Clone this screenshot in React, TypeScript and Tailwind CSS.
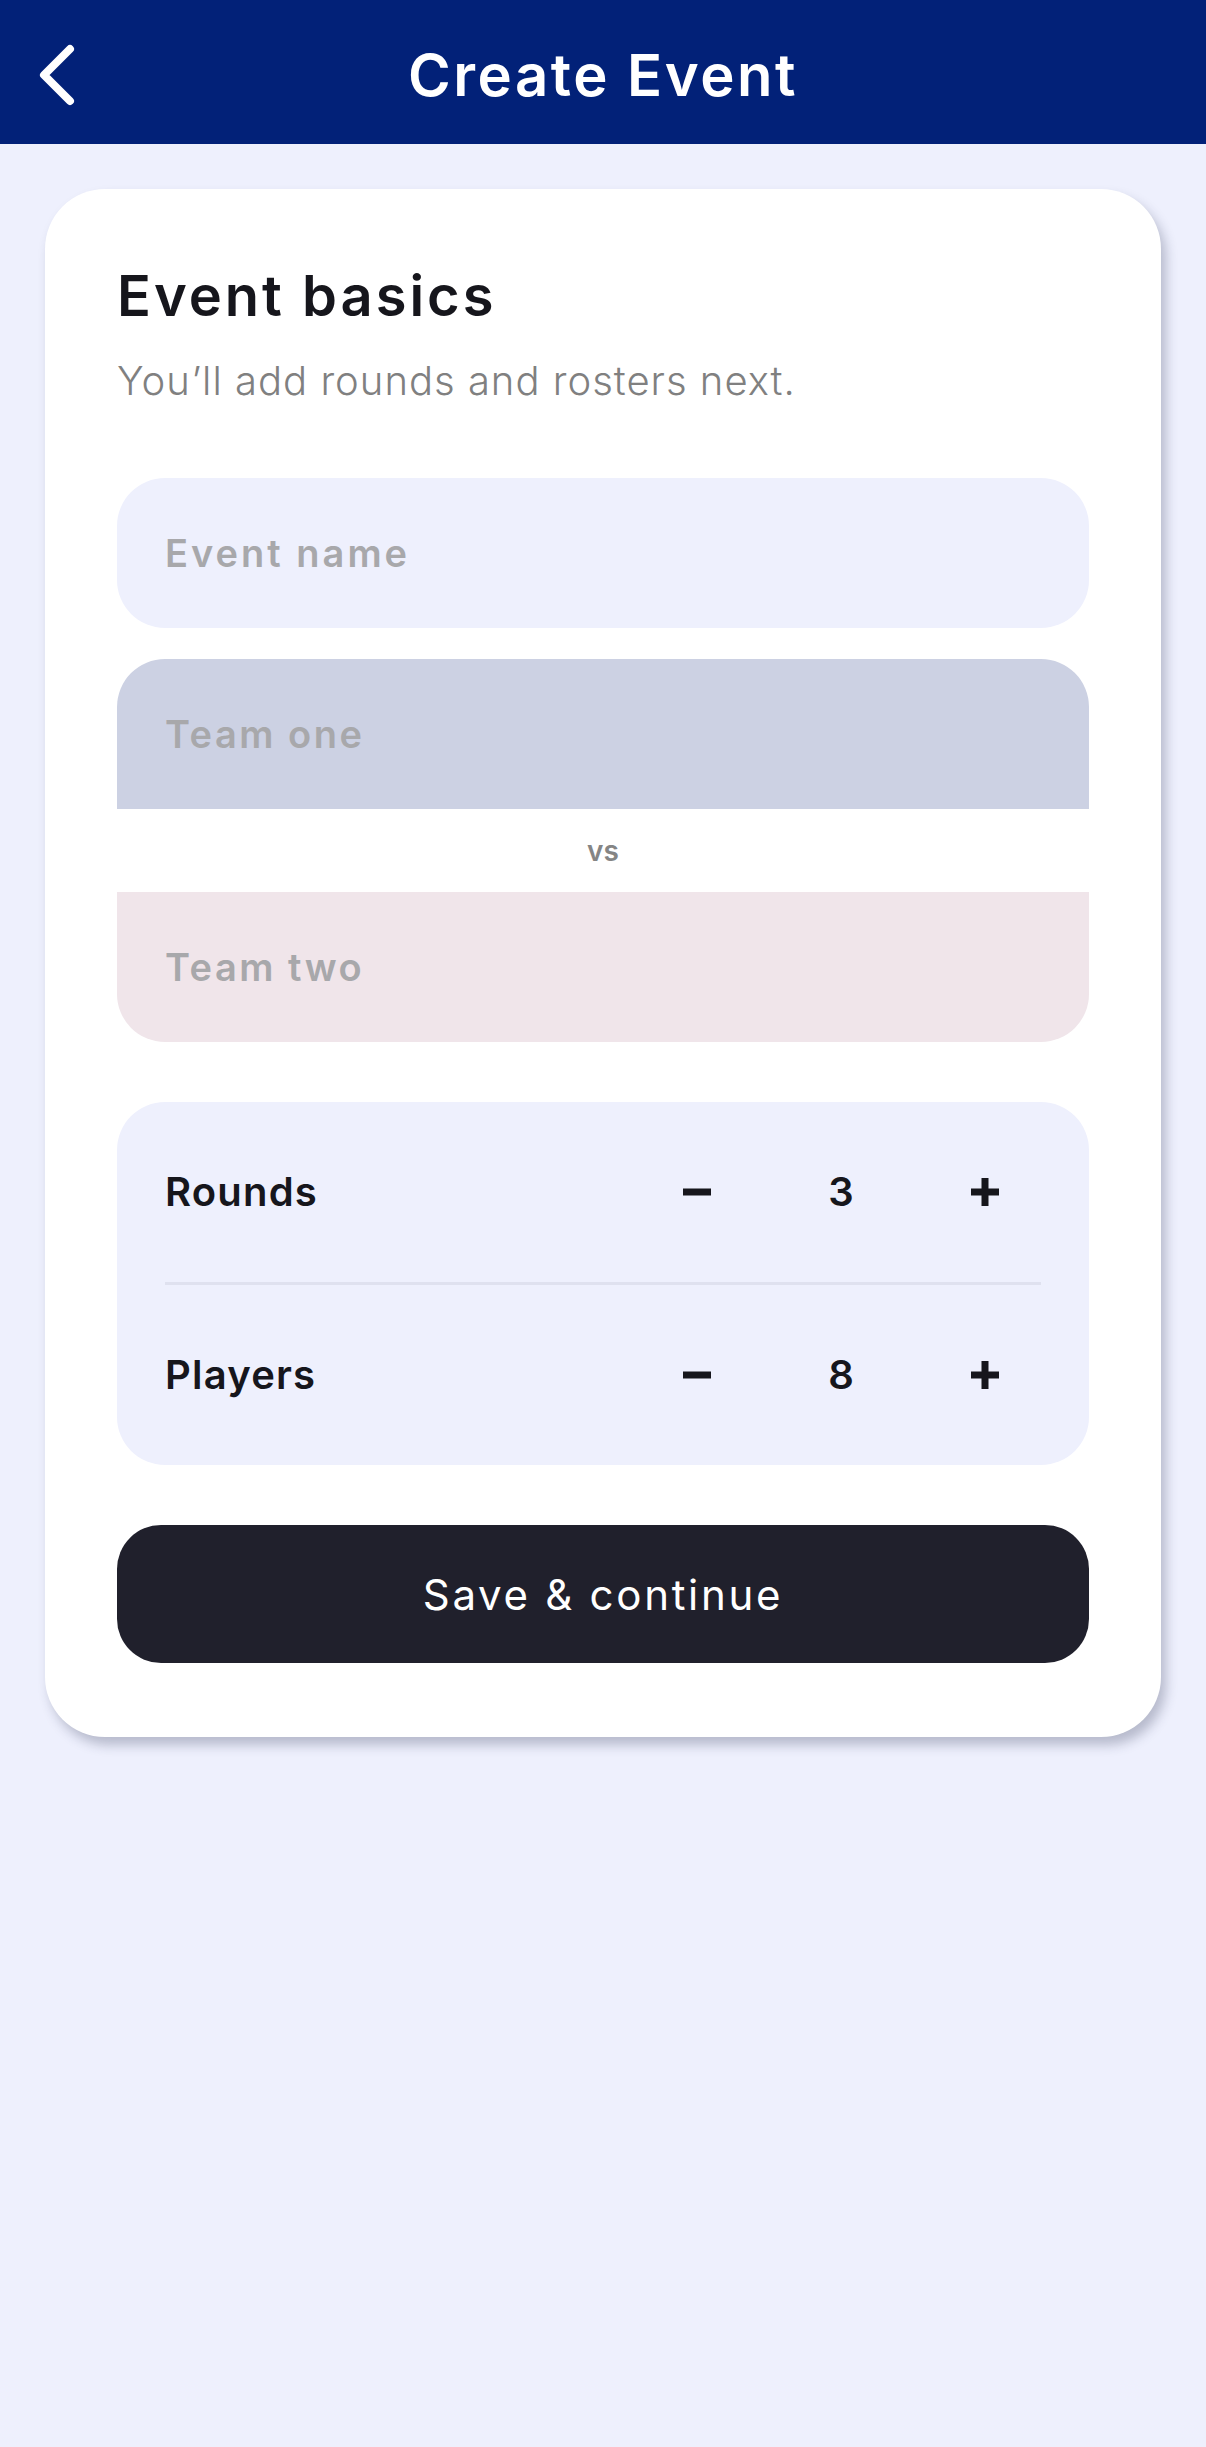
import React from 'react';

const font = { fontFamily: 'Inter, "Open Sans", sans-serif' };

function Stepper({ label, value }: { label: string; value: number }) {
  return (
    <div className="flex items-center h-[180px] px-[48px]">
      <span className="flex-1 text-[40px] font-semibold text-[#16161c] leading-none tracking-[1.2px]">{label}</span>
      <div className="flex items-center gap-[48px] mr-[8px]">
        <button className="w-[96px] h-[60px] flex items-center justify-center" aria-label="decrease">
          <svg width="30" height="30" viewBox="0 0 30 30">
            <rect x="1" y="11.5" width="28" height="7" fill="#16161c" />
          </svg>
        </button>
        <span className="w-[96px] text-center text-[40px] font-semibold text-[#16161c] leading-none">{value}</span>
        <button className="w-[96px] h-[60px] flex items-center justify-center" aria-label="increase">
          <svg width="30" height="30" viewBox="0 0 30 30">
            <rect x="1" y="11.5" width="28" height="7" fill="#16161c" />
            <rect x="11.5" y="1" width="7" height="28" fill="#16161c" />
          </svg>
        </button>
      </div>
    </div>
  );
}

export default function App() {
  return (
    <div className="min-h-[2447px] w-full bg-[#eef0fd]" style={font}>
      {/* Top bar */}
      <header className="h-[144px] bg-[#022178] grid grid-cols-[1fr_auto_1fr] items-center">
        <button className="pl-[34px] pt-[6px] flex items-center" aria-label="back">
          <svg width="48" height="64" viewBox="0 0 48 64">
            <polyline points="36,6 10,32 36,58" fill="none" stroke="#ffffff" strokeWidth="8" strokeLinecap="round" strokeLinejoin="round" />
          </svg>
        </button>
        <h1 className="mt-[6px] text-white text-[58px] font-semibold leading-none tracking-[2.5px]">Create Event</h1>
        <div />
      </header>

      <main className="pt-[45px] px-[45px]">
        <div className="bg-white rounded-[60px] shadow-[5px_8px_12px_rgba(40,45,80,0.28)] px-[72px] pt-[73px] pb-[74px]">
          <h2 className="text-[56px] font-semibold text-[#16161c] leading-[68px] tracking-[3px]">Event basics</h2>
          <p className="mt-[27px] text-[40px] font-light text-[#808080] leading-[48px] tracking-[1px]">You’ll add rounds and rosters next.</p>

          <input
            placeholder="Event name"
            className="mt-[73px] w-full h-[150px] rounded-[48px] bg-[#eef0fd] px-[48px] text-[38px] font-semibold tracking-[3px] text-[#16161c] placeholder:text-[#a8a8ab] outline-none"
          />

          <div className="mt-[31px] flex flex-col">
            <input
              placeholder="Team one"
              className="w-full h-[150px] rounded-t-[48px] bg-[#ccd1e3] px-[48px] text-[38px] font-semibold tracking-[2.5px] text-[#16161c] placeholder:text-[#a8a8ab] outline-none"
            />
            <div className="h-[83px] flex items-center justify-center">
              <span className="text-[28px] font-semibold text-[#858585] leading-none">vs</span>
            </div>
            <input
              placeholder="Team two"
              className="w-full h-[150px] rounded-b-[48px] bg-[#f0e5ea] px-[48px] text-[38px] font-semibold tracking-[2.5px] text-[#16161c] placeholder:text-[#a8a8ab] outline-none"
            />
          </div>

          <div className="mt-[60px] rounded-[48px] bg-[#eef0fd] flex flex-col">
            <Stepper label="Rounds" value={3} />
            <div className="mx-[48px] h-[3px] bg-[#dfe1ef]" />
            <Stepper label="Players" value={8} />
          </div>

          <button className="mt-[60px] w-full h-[138px] rounded-[44px] bg-[#20202c] text-white text-[42px] font-normal tracking-[2.7px]">
            Save &amp; continue
          </button>
        </div>
      </main>
    </div>
  );
}
